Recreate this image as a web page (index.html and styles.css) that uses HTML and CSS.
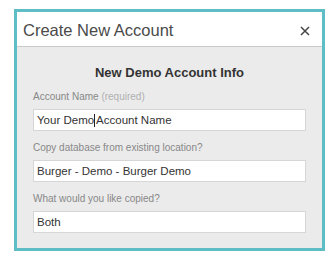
FILE: index.html
```html
<!DOCTYPE html>
<html lang="en">
<head>
    <meta charset="UTF-8">
    <meta name="viewport" content="width=device-width, initial-scale=1.0">
    <title>Create New Account</title>
    <link rel="stylesheet" href="styles.css">
</head>
<body>

    <div class="modal">
        <div class="modal-header">
            <span class="modal-title">Create New Account</span>
            <svg class="close" width="10" height="10" viewBox="0 0 10 10">
                <path d="M1 1 L9 9 M9 1 L1 9" stroke="#444" stroke-width="1.5" fill="none"/>
            </svg>
        </div>

        <div class="modal-body">
            <h2>New Demo Account Info</h2>

            <div class="form-group">
                <div class="label">Account Name <span class="hint">(required)</span></div>
                <div class="input">Your Demo<span class="caret"></span>Account Name</div>
            </div>
            <div class="form-group">
                <div class="label">Copy database from existing location?</div>
                <div class="input">Burger - Demo - Burger Demo</div>
            </div>
            <div class="form-group">
                <div class="label">What would you like copied?</div>
                <div class="input">Both</div>
            </div>
        </div>
    </div>

</body>
</html>
```

FILE: styles.css
```css
/* Basic styles */
body {
    font-family: "Liberation Sans", Arial, sans-serif;
    background-color: #fff;
    margin: 0;
    padding: 0;
}

.modal {
    width: 311px;
    margin: 9px 0 0 14px;
    border: 3px solid #5fbdc5;
    box-sizing: border-box;
}

.modal-header {
    height: 35px;
    box-sizing: border-box;
    padding: 3px 12px 0 6px;
    display: flex;
    align-items: center;
    justify-content: space-between;
    background-color: #fff;
    border-bottom: 1px solid #c9c9c9;
}

.modal-title {
    font-size: 16.5px;
    color: #4a4a4a;
}

.modal-body {
    background-color: #ebebeb;
    padding: 18px 16px 15px;
}

h2 {
    margin: 0 0 11px;
    font-size: 13px;
    line-height: 15px;
    text-align: center;
    color: #333;
}

.form-group {
    margin-bottom: 11px;
}

.form-group:last-child {
    margin-bottom: 0;
}

.label {
    font-size: 10px;
    line-height: 12px;
    color: #888;
    margin-bottom: 6px;
}

.hint {
    color: #b0b0b0;
}

.input {
    height: 22px;
    box-sizing: border-box;
    padding: 0 3px;
    line-height: 20px;
    font-size: 11.5px;
    color: #333;
    background-color: #fff;
    border: 1px solid #d6d6d6;
}

.caret {
    display: inline-block;
    width: 1px;
    height: 13px;
    margin: 0 1px 0 0;
    vertical-align: -3px;
    background-color: #222;
}
```
